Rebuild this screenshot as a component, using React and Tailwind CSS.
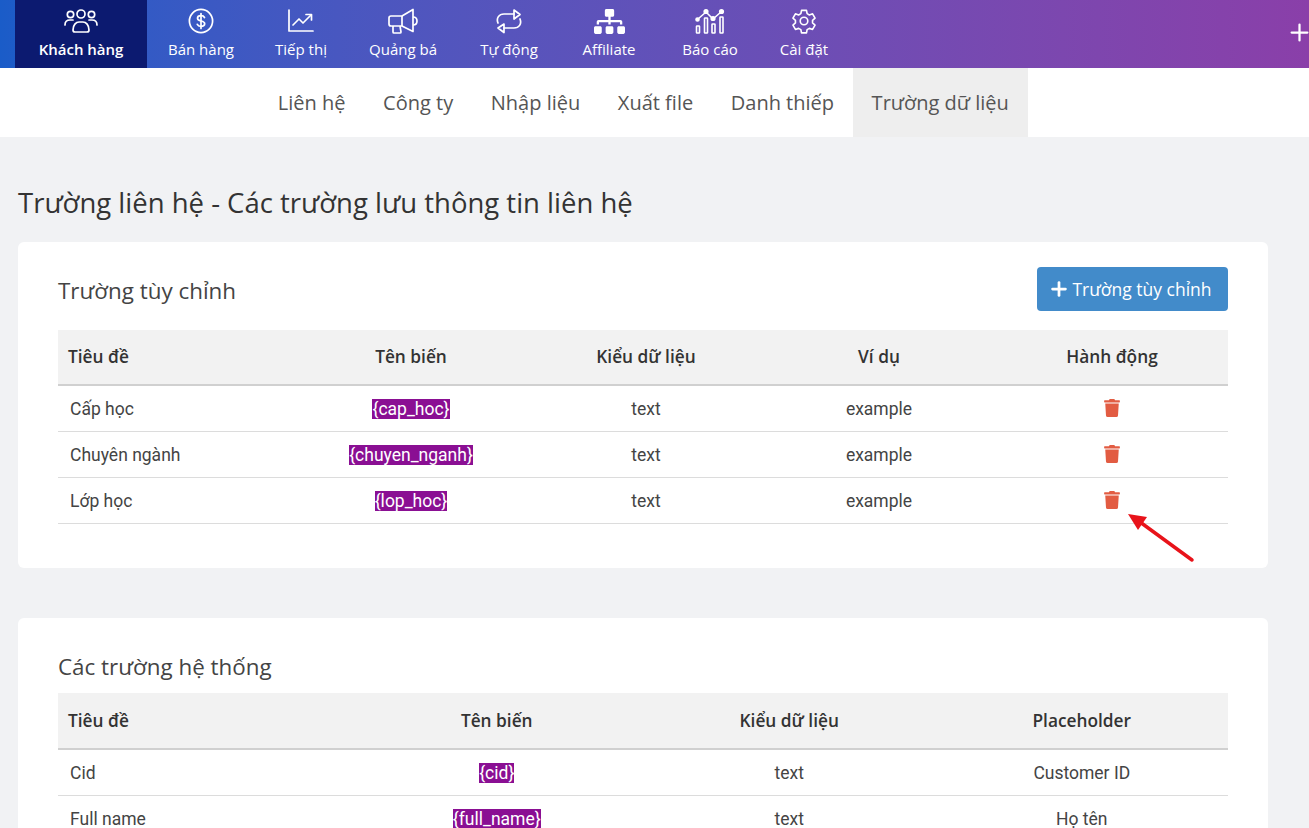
import React from "react";
import { Plus } from "lucide-react";
import { FaTrash, FaSitemap } from "react-icons/fa";

const UsersIcon = () => (
  <svg width="34" height="26" viewBox="0 0 34 26" fill="none" stroke="currentColor" strokeWidth="1.7">
    <circle cx="17" cy="6" r="4" />
    <circle cx="6.5" cy="6.5" r="3.2" />
    <circle cx="27.5" cy="6.5" r="3.2" />
    <path d="M1 17c0-3 2-5 5-5h3" strokeLinecap="round" />
    <path d="M33 17c0-3-2-5-5-5h-3" strokeLinecap="round" />
    <path d="M9 22c0-5 3-8 6-8h4c3 0 6 3 6 8 0 1-1 2-2 2H11c-1 0-2-1-2-2z" />
  </svg>
);

const DollarIcon = () => (
  <svg width="26" height="26" viewBox="0 0 26 26" fill="none" stroke="currentColor" strokeWidth="1.7" strokeLinecap="round">
    <circle cx="13" cy="13" r="11.6" />
    <path d="M16.5 9.5c-.6-1.2-1.8-1.8-3.5-1.8-2 0-3.500 1-3.500 2.600 0 3.700 7.200 1.700 7.200 5.400 0 1.600-1.600 2.600-3.700 2.600-1.800 0-3.100-.7-3.700-2" />
    <path d="M13 5.500v15" />
  </svg>
);

const ChartIcon = () => (
  <svg width="26" height="24" viewBox="0 0 26 24" fill="none" stroke="currentColor" strokeWidth="1.7" strokeLinecap="round" strokeLinejoin="round">
    <path d="M1 1v21h24" />
    <path d="M5 16l6-6 4 4 8-8" />
    <path d="M18 5.500h5.500V11" />
  </svg>
);

const MegaphoneIcon = () => (
  <svg width="30" height="27" viewBox="0 0 30 27" fill="none" stroke="currentColor" strokeWidth="1.7" strokeLinejoin="round">
    <path d="M3 8h11l11-6.500v22L14 18H3c-1 0-2-1-2-2v-6c0-1 1-2 2-2z" />
    <path d="M14 8v10" />
    <path d="M25 9c2.500 0 4 1.800 4 4s-1.500 4-4 4" />
    <path d="M5 18v6c0 .6.400 1 1 1h6c.6 0 1-.4 1-1l-1-6" />
  </svg>
);

const LoopIcon = () => (
  <svg width="28" height="26" viewBox="0 0 28 26" fill="none" stroke="currentColor" strokeWidth="1.700" strokeLinejoin="round" strokeLinecap="round">
    <path d="M3 15c-2-5 1-9 6-9h10" />
    <path d="M19 2l6 4.500-6 4.500z" />
    <path d="M25 11c2 5-1 9-6 9H9" />
    <path d="M9 16l-6 4 6 4.500z" />
  </svg>
);

const ReportIcon = () => (
  <svg width="30" height="26" viewBox="0 0 30 26" fill="none" stroke="currentColor" strokeWidth="1.600" strokeLinejoin="round">
    <path d="M3 11l8-7 7 7 8-7" />
    <circle cx="2.500" cy="11.500" r="1.500" fill="currentColor" />
    <circle cx="11" cy="3.500" r="1.800" fill="currentColor" />
    <circle cx="18" cy="10.500" r="1.800" fill="currentColor" />
    <circle cx="26.500" cy="3.500" r="1.800" fill="currentColor" />
    <rect x="1.500" y="18" width="3" height="7" rx="0.500" />
    <rect x="9.500" y="10" width="3" height="15" rx="0.500" />
    <rect x="17" y="16" width="3" height="9" rx="0.500" />
    <rect x="25" y="9" width="3" height="16" rx="0.500" />
  </svg>
);

const GearIcon = () => (
  <svg width="26" height="26" viewBox="0 0 24 24" fill="none" stroke="currentColor" strokeWidth="1.500" strokeLinejoin="round">
    <path d="M9.700 2.200h4.600l.6 3 2.100 1.200 2.900-1 2.300 4-2.300 2v2.400l2.300 2-2.300 4-2.900-1-2.100 1.200-.6 3H9.700l-.6-3L7 18.800l-2.900 1-2.300-4 2.300-2v-2.400l-2.300-2 2.300-4 2.900 1 2.100-1.200z" />
    <circle cx="12" cy="12" r="3.500" />
  </svg>
);

const navItems = [
  { label: "Khách hàng", icon: <UsersIcon />, active: true },
  { label: "Bán hàng", icon: <DollarIcon />, w: "w-[108px]" },
  { label: "Tiếp thị", icon: <ChartIcon />, w: "w-[92px]" },
  { label: "Quảng bá", icon: <MegaphoneIcon />, w: "w-[112px]" },
  { label: "Tự động", icon: <LoopIcon />, w: "w-[100px]" },
  { label: "Affiliate", icon: <FaSitemap size={31} />, w: "w-[100px]" },
  { label: "Báo cáo", icon: <ReportIcon />, w: "w-[102px]" },
  { label: "Cài đặt", icon: <GearIcon />, w: "w-[86px]" },
];

const subTabs = ["Liên hệ", "Công ty", "Nhập liệu", "Xuất file", "Danh thiếp", "Trường dữ liệu"];

const customRows = [
  ["Cấp học", "{cap_hoc}"],
  ["Chuyên ngành", "{chuyen_nganh}"],
  ["Lớp học", "{lop_hoc}"],
];

const systemRows = [
  ["Cid", "{cid}", "text", "Customer ID"],
  ["Full name", "{full_name}", "text", "Họ tên"],
];

const Th = ({ children, first, tall }) => (
  <th className={`border-b-2 border-[#d0d0d0] bg-[#f2f2f2] text-[17.300px] font-semibold text-[#333] ${tall ? "h-[56px]" : "h-[55px]"} ${first ? "pl-[10px] text-left" : "text-center"}`}>
    {children}
  </th>
);

const Td = ({ children, first }) => (
  <td className={`h-[46px] border-b border-[#dcdcdc] p-0 pt-[2px] text-[17.500px] text-[#444] ${first ? "pl-[12px] text-left" : "text-center"}`}>
    {children}
  </td>
);

const Variable = ({ children }) => <span className="bg-[#8a0f93] text-white">{children}</span>;

export default function App() {
  return (
    <div className="h-[828px] overflow-hidden bg-[#f1f2f4] font-['Open_Sans',sans-serif] text-[#333]">
      <div className="relative flex h-[68px] bg-gradient-to-r from-[#1a5cc8] to-[#8a3fa9] pl-[15px] text-white">
        {navItems.map((item) => (
          <div
            key={item.label}
            className={`flex h-[68px] flex-col items-center ${item.active ? "w-[132px] bg-[#0c1a70] font-semibold" : item.w}`}
          >
            <div className="flex h-[38px] items-center justify-center pt-[4px]">{item.icon}</div>
            <div className="text-[15px] leading-[22px] whitespace-nowrap">{item.label}</div>
          </div>
        ))}
        <Plus size={27} strokeWidth={2} className="absolute top-[19px] -right-[4px]" />
      </div>

      <div className="flex h-[69px] bg-white pl-[259px]">
        {subTabs.map((tab, i) => (
          <div
            key={tab}
            className={`flex items-center px-[18.800px] text-[20px] text-[#555] ${i === 5 ? "bg-[#eeeeee]" : ""}`}
          >
            {tab}
          </div>
        ))}
      </div>

      <div className="px-[18px]">
        <h1 className="mt-[44px] text-[27.500px] leading-[44px] font-normal text-[#333]">
          Trường liên hệ - Các trường lưu thông tin liên hệ
        </h1>

        <div className="mt-[17px] h-[326px] w-[1250px] rounded-[6px] bg-white px-[40px] pt-[25px]">
          <div className="flex h-[44px] items-center justify-between">
            <h2 className="pt-[4px] text-[22.400px] font-normal text-[#444]">Trường tùy chỉnh</h2>
            <button className="flex h-[44px] w-[191px] items-center justify-center gap-[2px] rounded-[4px] bg-[#428bca] pr-[5px] text-[17.500px] text-white">
              <Plus size={22} strokeWidth={3} />
              Trường tùy chỉnh
            </button>
          </div>
          <table className="mt-[19px] w-full table-fixed border-collapse font-['Roboto',sans-serif]">
            <colgroup>
              <col className="w-[234px]" />
              <col className="w-[238px]" />
              <col className="w-[232px]" />
              <col className="w-[234px]" />
              <col className="w-[232px]" />
            </colgroup>
            <thead className="font-['Open_Sans',sans-serif]">
              <tr>
                <Th first>Tiêu đề</Th>
                <Th>Tên biến</Th>
                <Th>Kiểu dữ liệu</Th>
                <Th>Ví dụ</Th>
                <Th>Hành động</Th>
              </tr>
            </thead>
            <tbody>
              {customRows.map((row) => (
                <tr key={row[0]}>
                  <Td first>{row[0]}</Td>
                  <Td><Variable>{row[1]}</Variable></Td>
                  <Td>text</Td>
                  <Td>example</Td>
                  <Td>
                    <FaTrash size={18} className="mx-auto -translate-y-[1px] text-[#e25c42]" />
                  </Td>
                </tr>
              ))}
            </tbody>
          </table>
        </div>

        <div className="mt-[50px] w-[1250px] rounded-[6px] bg-white px-[40px] pt-[32px]">
          <h2 className="text-[22.400px] leading-[34px] font-normal text-[#444]">Các trường hệ thống</h2>
          <table className="mt-[9px] w-full table-fixed border-collapse font-['Roboto',sans-serif]">
            <thead className="font-['Open_Sans',sans-serif]">
              <tr>
                <Th first tall>Tiêu đề</Th>
                <Th tall>Tên biến</Th>
                <Th tall>Kiểu dữ liệu</Th>
                <Th tall>Placeholder</Th>
              </tr>
            </thead>
            <tbody>
              {systemRows.map((row) => (
                <tr key={row[0]}>
                  <Td first>{row[0]}</Td>
                  <Td><Variable>{row[1]}</Variable></Td>
                  <Td>{row[2]}</Td>
                  <Td>{row[3]}</Td>
                </tr>
              ))}
            </tbody>
          </table>
        </div>
      </div>

      {/* red annotation arrow over the table */}
      <svg className="absolute top-[510px] left-[1125px]" width="72" height="54" viewBox="0 0 72 54" fill="none">
        <path d="M67 50L15 12" stroke="#e8131a" strokeWidth="3.500" strokeLinecap="round" />
        <path d="M3 4l19 3-9 13z" fill="#e8131a" />
      </svg>
    </div>
  );
}
